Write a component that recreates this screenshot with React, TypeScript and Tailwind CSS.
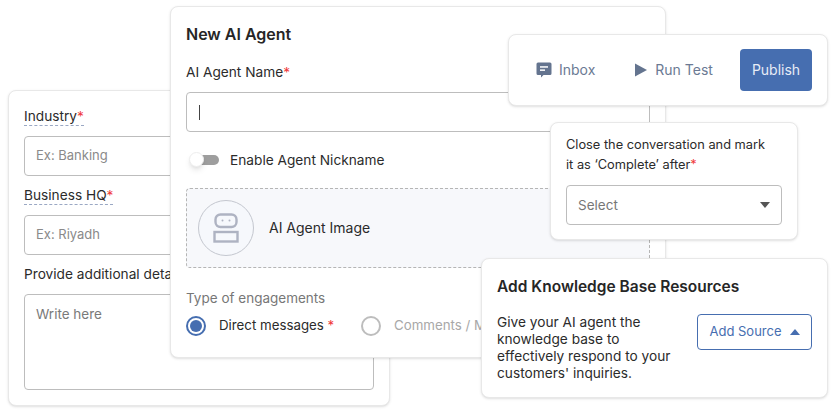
const font = { fontFamily: 'Inter, "Noto Sans", sans-serif' }

function Star() {
  return <span className="text-[#f03a3a]">*</span>
}

function DottedLabel({ children }: { children: React.ReactNode }) {
  return (
    <div className="h-[24px] flex">
      <span className="text-[13.7px] leading-[20px] h-[20px] text-[#2b2b2b] border-b border-dashed border-[#9aa8c4]">
        {children}
        <Star />
      </span>
    </div>
  )
}

function TextBox({ placeholder }: { placeholder: string }) {
  return (
    <div className="h-[40px] mt-[6px] rounded border border-[#bdbdbd] bg-white flex items-center px-[11px] text-[13px] text-[#8a8a8a]">
      {placeholder}
    </div>
  )
}

function RobotIcon() {
  return (
    <svg width="26" height="30" viewBox="0 0 26 30" fill="none" stroke="#aeb3c2" strokeWidth="2.4">
      <rect x="2.5" y="1.5" width="21" height="12.5" rx="5" />
      <rect x="1.5" y="19" width="23" height="9.5" />
      <circle cx="9.5" cy="7.5" r="1" fill="#aeb3c2" stroke="none" />
      <circle cx="16.5" cy="7.5" r="1" fill="#aeb3c2" stroke="none" />
    </svg>
  )
}

function InboxIcon() {
  return (
    <svg width="16" height="16" viewBox="0 0 16 16">
      <path d="M2 0.5h12a1.5 1.5 0 0 1 1.5 1.5v9.5a1.5 1.5 0 0 1-1.5 1.5H7.5L5 15.5V13H2A1.5 1.5 0 0 1 .5 11.5V2A1.5 1.5 0 0 1 2 .5z" fill="#64748f" />
      <rect x="4" y="4.2" width="8" height="1.5" fill="#fff" />
      <rect x="4" y="7.4" width="5" height="1.5" fill="#fff" />
    </svg>
  )
}

export default function App() {
  return (
    <div className="relative w-[836px] h-[416px] bg-white overflow-hidden" style={font}>
      {/* Business details card */}
      <div className="absolute left-[8px] top-[90px] w-[382px] h-[316px] bg-white rounded-lg border border-[#e8e8e8] shadow-sm px-[15px] pt-[15px]">
        <DottedLabel>Industry</DottedLabel>
        <TextBox placeholder="Ex: Banking" />
        <div className="mt-[9px]">
          <DottedLabel>Business HQ</DottedLabel>
        </div>
        <TextBox placeholder="Ex: Riyadh" />
        <div className="mt-[9px] text-[13.7px] leading-[20px] text-[#2b2b2b]">Provide additional details</div>
        <div className="mt-[10px] h-[96px] rounded border border-[#bdbdbd] px-[11px] py-[9px] text-[13.5px] leading-[20px] text-[#7a7a7a]">
          Write here
        </div>
      </div>

      {/* New agent card */}
      <div className="absolute left-[170px] top-[6px] w-[496px] h-[352px] bg-white rounded-lg border border-[#e8e8e8] shadow-sm px-[15px] pt-[17px]">
        <h2 className="text-[16px] leading-[20px] font-semibold text-[#262626]">New AI Agent</h2>
        <div className="mt-[18px] text-[13.7px] leading-[20px] text-[#2b2b2b]">
          AI Agent Name
          <Star />
        </div>
        <div className="mt-[10px] h-[40px] w-[464px] rounded border border-[#bdbdbd] flex items-center px-3">
          <div className="w-px h-[15px] bg-[#444]" />
        </div>
        <div className="mt-[18px] flex items-center">
          <div className="relative w-[29px] h-[10px] ml-[4px] rounded-full bg-[#9e9e9e]">
            <div className="absolute -left-[1px] -top-[3px] w-[15px] h-[15px] rounded-full bg-white shadow-md border border-[#eee]" />
          </div>
          <span className="ml-[11px] text-[13.7px] leading-[20px] text-[#2b2b2b]">Enable Agent Nickname</span>
        </div>
        <div className="mt-[18px] h-[80px] w-[464px] rounded border border-dashed border-[#b5b5b5] bg-[#f7f8fb] flex items-center pl-[11px]">
          <div className="w-[56px] h-[56px] rounded-full border border-[#c4c7cf] bg-[#f6f8fc] flex items-center justify-center">
            <RobotIcon />
          </div>
          <span className="ml-[15px] text-sm text-[#2b2b2b]">AI Agent Image</span>
        </div>
        <div className="mt-[20px] text-[13.5px] leading-[20px] text-[#777]">Type of engagements</div>
        <div className="mt-[8px] flex items-center">
          <div className="w-[20px] h-[20px] rounded-full border-2 border-[#466eb0] flex items-center justify-center">
            <div className="w-[12px] h-[12px] rounded-full bg-[#466eb0]" />
          </div>
          <span className="ml-[13px] w-[142px] text-[13.3px] text-[#2b2b2b]">
            Direct messages <Star />
          </span>
          <div className="w-[20px] h-[20px] rounded-full border-2 border-[#bdbdbd]" />
          <span className="ml-[13px] text-[13.3px] text-[#a8a8a8] whitespace-nowrap">Comments / Mentions</span>
        </div>
      </div>

      {/* Action bar */}
      <div className="absolute left-[508px] top-[34px] w-[320px] h-[72px] bg-white rounded-lg border border-[#e8e8e8] shadow-sm flex items-center pl-[27px] pr-[15px]">
        <InboxIcon />
        <span className="ml-[7px] text-sm text-[#6b7a93]">Inbox</span>
        <svg className="ml-[40px]" width="12" height="14" viewBox="0 0 12 14">
          <path d="M0 .5 12 7 0 13.5z" fill="#64748f" />
        </svg>
        <span className="ml-[8px] text-sm text-[#6b7a93]">Run Test</span>
        <button className="ml-auto w-[72px] h-[42px] rounded-sm bg-[#466eb0] text-sm text-[#e6ecf6]">Publish</button>
      </div>

      {/* Close conversation card */}
      <div className="absolute left-[550px] top-[122px] w-[248px] h-[118px] bg-white rounded-lg border border-[#e8e8e8] shadow-sm px-[15px] pt-[12px]">
        <p className="text-[12.8px] leading-[20px] text-[#2b2b2b]">
          Close the conversation and mark
          <br />
          it as ‘Complete’ after
          <Star />
        </p>
        <div className="mt-[10px] h-[40px] rounded border border-[#bdbdbd] flex items-center justify-between pl-[11px] pr-[11px] text-[13.5px] text-[#777]">
          Select
          <svg width="10" height="6" viewBox="0 0 10 6">
            <path d="M0 0h10L5 6z" fill="#555" />
          </svg>
        </div>
      </div>

      {/* Knowledge base card */}
      <div className="absolute left-[481px] top-[258px] w-[347px] h-[140px] bg-white rounded-lg border border-[#e8e8e8] shadow-sm px-[15px] pt-[18px]">
        <h2 className="text-[15.5px] leading-[20px] font-semibold text-[#262626]">Add Knowledge Base Resources</h2>
        <div className="mt-[17px] flex justify-between items-start">
          <p className="w-[190px] text-[13.7px] leading-[17px] text-[#2b2b2b]">
            Give your AI agent the knowledge base to effectively respond to your customers' inquiries.
          </p>
          <button className="w-[115px] h-[36px] rounded-sm border border-[#466eb0] text-[13px] text-[#466eb0] flex items-center justify-center gap-2">
            Add Source
            <svg width="10" height="6" viewBox="0 0 10 6">
              <path d="M0 6 5 0l5 6z" fill="#466eb0" />
            </svg>
          </button>
        </div>
      </div>
    </div>
  )
}
